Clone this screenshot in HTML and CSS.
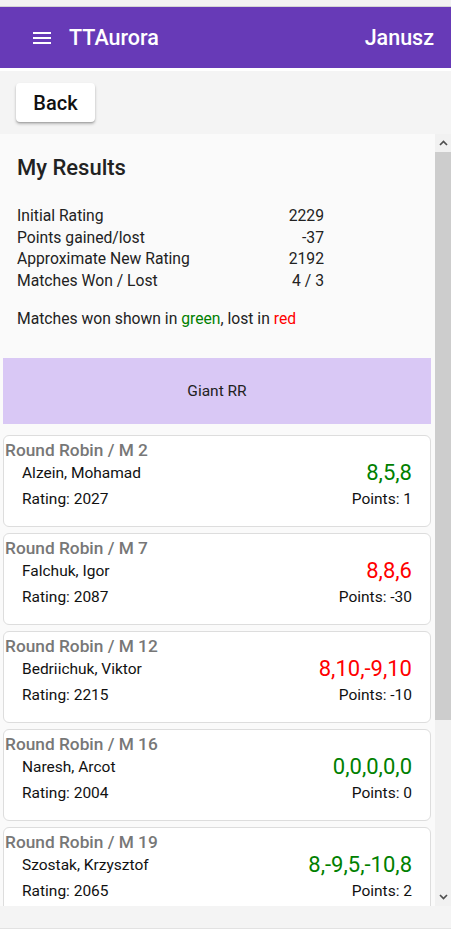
FILE: index.html
```html
<!DOCTYPE html>
<html>
<head>
<meta charset="utf-8">
<link rel="stylesheet" href="styles.css">
</head>
<body>
<div class="topstrip"></div>
<header class="appbar">
  <div class="brand">
    <svg class="menu" width="24" height="24" viewBox="0 0 24 24"><path d="M3 6h18v2H3zM3 11h18v2H3zM3 16h18v2H3z" fill="#fff"/></svg>
    <span class="title">TTAurora</span>
  </div>
  <span class="user">Janusz</span>
</header>
<div class="gap"></div>
<div class="toolbar">
  <button class="back">Back</button>
</div>
<div class="scroller">
  <div class="viewport">
    <section class="summary">
      <h2>My Results</h2>
      <table class="stats">
        <tr><td>Initial Rating</td><td class="num">2229</td></tr>
        <tr><td>Points gained/lost</td><td class="num">-37</td></tr>
        <tr><td>Approximate New Rating</td><td class="num">2192</td></tr>
        <tr><td>Matches Won / Lost</td><td class="num">4 / 3</td></tr>
      </table>
      <p class="legend">Matches won shown in <span class="won">green</span>, lost in <span class="lost">red</span></p>
    </section>
    <div class="event">Giant RR</div>
    <div class="cards">
      <div class="card">
        <div class="round">Round Robin / M 2</div>
        <div class="row"><span class="name">Alzein, Mohamad</span><span class="score won">8,5,8</span></div>
        <div class="row"><span>Rating: 2027</span><span>Points: 1</span></div>
      </div>
      <div class="card">
        <div class="round">Round Robin / M 7</div>
        <div class="row"><span class="name">Falchuk, Igor</span><span class="score lost">8,8,6</span></div>
        <div class="row"><span>Rating: 2087</span><span>Points: -30</span></div>
      </div>
      <div class="card">
        <div class="round">Round Robin / M 12</div>
        <div class="row"><span class="name">Bedriichuk, Viktor</span><span class="score lost">8,10,-9,10</span></div>
        <div class="row"><span>Rating: 2215</span><span>Points: -10</span></div>
      </div>
      <div class="card">
        <div class="round">Round Robin / M 16</div>
        <div class="row"><span class="name">Naresh, Arcot</span><span class="score won">0,0,0,0,0</span></div>
        <div class="row"><span>Rating: 2004</span><span>Points: 0</span></div>
      </div>
      <div class="card">
        <div class="round">Round Robin / M 19</div>
        <div class="row"><span class="name">Szostak, Krzysztof</span><span class="score won">8,-9,5,-10,8</span></div>
        <div class="row"><span>Rating: 2065</span><span>Points: 2</span></div>
      </div>
    </div>
  </div>
  <div class="scrollbar">
    <div class="sb-btn">
      <svg width="9" height="6" viewBox="0 0 9 6"><path d="M1 5 L4.5 1.5 L8 5" fill="none" stroke="#505050" stroke-width="1.7"/></svg>
    </div>
    <div class="sb-track">
      <div class="sb-thumb"></div>
    </div>
    <div class="sb-btn">
      <svg width="9" height="6" viewBox="0 0 9 6"><path d="M1 1 L4.5 4.5 L8 1" fill="none" stroke="#505050" stroke-width="1.7"/></svg>
    </div>
  </div>
</div>
<div class="footer"></div>
</body>
</html>
```
FILE: styles.css
```css
* { box-sizing: border-box; }
html, body { margin: 0; padding: 0; }
body {
  font-family: Roboto, "Liberation Sans", sans-serif;
  background: #ffffff;
  color: #212121;
  width: 451px;
}
.topstrip {
  height: 7px;
  background: #f2f2f2;
  border-bottom: 1px solid #d4d4d4;
}
.appbar {
  height: 61px;
  background: #673ab7;
  color: #fff;
  display: flex;
  align-items: center;
  justify-content: space-between;
  padding: 0 17px 0 30px;
}
.brand { display: flex; align-items: center; gap: 15px; }
.menu { display: block; }
.title, .user { font-size: 21.5px; font-weight: 500; }
.gap { height: 3px; background: #fff; }
.toolbar {
  height: 63px;
  background: #f4f4f4;
  padding: 12px 16px;
}
.back {
  width: 79px;
  height: 39px;
  border: none;
  border-radius: 4px;
  background: #fff;
  font-family: Roboto, "Liberation Sans", sans-serif;
  font-size: 20px;
  font-weight: 500;
  color: #111;
  box-shadow: 0 2px 3px rgba(0,0,0,0.25), 0 1px 1px rgba(0,0,0,0.12);
  padding: 0;
}
.scroller {
  height: 772px;
  display: flex;
  background: #fafafa;
}
.viewport {
  flex: 1;
  overflow: hidden;
}
.scrollbar {
  width: 16px;
  display: flex;
  flex-direction: column;
  background: #f1f1f1;
}
.sb-btn {
  height: 18px;
  display: flex;
  align-items: center;
  justify-content: center;
  background: #f1f1f1;
}
.sb-btn svg { display: block; }
.sb-track { flex: 1; background: #f1f1f1; }
.sb-thumb { height: 568px; background: #cdcdcd; }
.summary { padding: 22px 17px 0 17px; }
.summary h2 {
  margin: 0 0 25px 0;
  font-size: 22px;
  font-weight: 500;
  line-height: 24px;
  color: #222;
}
.stats {
  border-collapse: collapse;
  width: 307px;
  font-size: 15.7px;
  color: #222;
}
.stats td { padding: 0; height: 21.5px; line-height: 21.5px; }
.stats .num { text-align: right; }
.legend {
  margin: 18px 0 0 0;
  font-size: 15.7px;
  line-height: 20px;
  color: #222;
}
.won { color: #008000; }
.lost { color: #ff0000; }
.event {
  margin: 29px 4px 0 3px;
  height: 66px;
  background: #d9c8f5;
  display: flex;
  align-items: center;
  justify-content: center;
  font-size: 15.5px;
  color: #222;
}
.cards {
  display: flex;
  flex-direction: column;
  gap: 6px;
  padding: 11px 4px 12px 3px;
}
.card {
  height: 92px;
  flex-shrink: 0;
  background: #fff;
  border: 1px solid #dddddd;
  border-radius: 6px;
  padding: 4px 18px 0 1px;
}
.round {
  font-size: 17.3px;
  font-weight: 500;
  color: #777;
  line-height: 20px;
}
.row {
  display: flex;
  justify-content: space-between;
  align-items: center;
  padding-left: 17px;
  font-size: 15.5px;
  color: #111;
  height: 25px;
}
.row + .row { height: 27px; }
.score { font-size: 22px; }
.footer {
  height: 23px;
  background: #f4f4f4;
  border-bottom: 1px solid #e2e2e2;
}
```
